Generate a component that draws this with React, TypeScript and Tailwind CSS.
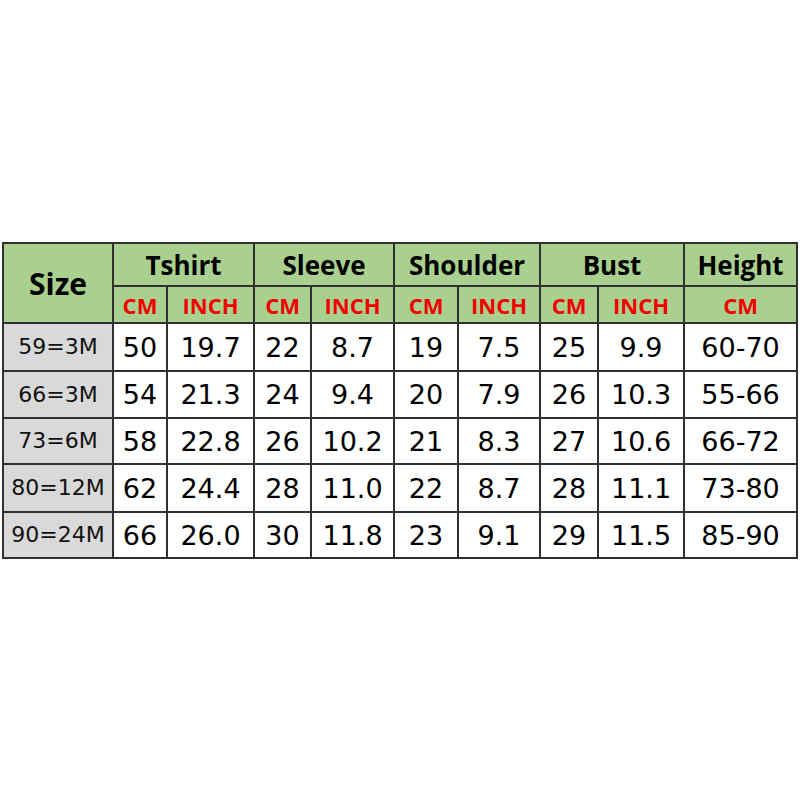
import React from 'react';

const rows = [
  ['59=3M', '50', '19.7', '22', '8.7', '19', '7.5', '25', '9.9', '60-70'],
  ['66=3M', '54', '21.3', '24', '9.4', '20', '7.9', '26', '10.3', '55-66'],
  ['73=6M', '58', '22.8', '26', '10.2', '21', '8.3', '27', '10.6', '66-72'],
  ['80=12M', '62', '24.4', '28', '11.0', '22', '8.7', '28', '11.1', '73-80'],
  ['90=24M', '66', '26.0', '30', '11.8', '23', '9.1', '29', '11.5', '85-90'],
];

const rowHeights = ['h-[48px]', 'h-[47px]', 'h-[46px]', 'h-[48px]', 'h-[46px]'];

const groups = ['Tshirt', 'Sleeve', 'Shoulder', 'Bust'];

const cell = 'border-2 border-[#303030] text-center align-middle p-0';
const head = "font-['Open_Sans',sans-serif] font-bold text-[26px] text-black";
const unit = "font-['Open_Sans',sans-serif] font-bold text-[22px] text-[#f20000]";

const App: React.FC = () => {
  return (
    <div className="w-[800px] h-[800px] bg-white pt-[242px] pl-[2px]">
      <table className="table-fixed border-collapse w-[794px]">
        <colgroup>
          <col className="w-[110px]" />
          <col className="w-[54px]" />
          <col className="w-[87px]" />
          <col className="w-[57px]" />
          <col className="w-[83px]" />
          <col className="w-[64px]" />
          <col className="w-[82px]" />
          <col className="w-[58px]" />
          <col className="w-[86px]" />
          <col className="w-[113px]" />
        </colgroup>
        <thead>
          <tr className="h-[43px] bg-[#a9d08e]">
            <th
              rowSpan={2}
              className={`${cell} font-['Open_Sans',sans-serif] font-bold text-[30px] text-black leading-none pt-[2px]`}
            >
              Size
            </th>
            {groups.map((g) => (
              <th key={g} colSpan={2} className={`${cell} ${head} leading-none`}>
                {g}
              </th>
            ))}
            <th className={`${cell} ${head} leading-none`}>Height</th>
          </tr>
          <tr className="h-[37px] bg-[#a9d08e]">
            {groups.map((g) => (
              <React.Fragment key={g}>
                <th className={`${cell} ${unit} leading-none`}>CM</th>
                <th className={`${cell} ${unit} leading-none`}>INCH</th>
              </React.Fragment>
            ))}
            <th className={`${cell} ${unit} leading-none`}>CM</th>
          </tr>
        </thead>
        <tbody>
          {rows.map((r, i) => (
            <tr key={r[0]} className={rowHeights[i]}>
              {r.map((v, j) => (
                <td
                  key={j}
                  className={
                    j === 0
                      ? `${cell} bg-[#d9d9d9] font-['DejaVu_Sans',sans-serif] text-[22px] text-[#111] leading-none`
                      : `${cell} bg-white font-['DejaVu_Sans',sans-serif] text-[27px] text-black leading-none`
                  }
                >
                  {v}
                </td>
              ))}
            </tr>
          ))}
        </tbody>
      </table>
    </div>
  );
};

export default App;
